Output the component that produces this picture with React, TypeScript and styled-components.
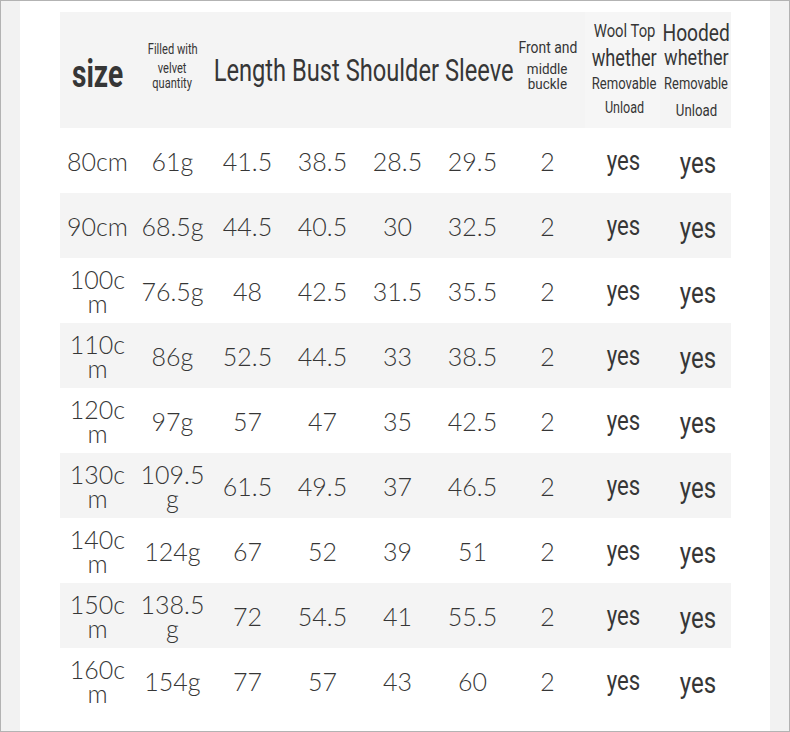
import React from 'react';
import styled, { createGlobalStyle } from 'styled-components';

// size chart rows: [size, filling, length, bust, shoulder, sleeve, buckle]
const rows = [
  ['80cm', '61g', '41.5', '38.5', '28.5', '29.5', '2'],
  ['90cm', '68.5g', '44.5', '40.5', '30', '32.5', '2'],
  ['100cm', '76.5g', '48', '42.5', '31.5', '35.5', '2'],
  ['110cm', '86g', '52.5', '44.5', '33', '38.5', '2'],
  ['120cm', '97g', '57', '47', '35', '42.5', '2'],
  ['130cm', '109.5g', '61.5', '49.5', '37', '46.5', '2'],
  ['140cm', '124g', '67', '52', '39', '51', '2'],
  ['150cm', '138.5g', '72', '54.5', '41', '55.5', '2'],
  ['160cm', '154g', '77', '57', '43', '60', '2'],
];

const GlobalStyle = createGlobalStyle`
  html, body {
    margin: 0;
    padding: 0;
    background: #fff;
  }
  * {
    box-sizing: border-box;
  }
`;

const App: React.FC = () => {
  return (
    <>
      <GlobalStyle />
      <Frame>
        <SideBand />
        <Main>
          <Chart>
            <HeaderRow>
              <HeadCell $shift={10}>
                <Cond $size={38} $weight={700}>size</Cond>
              </HeadCell>
              <HeadCell $shift={-12}>
                <HeadStack>
                  <Cond $size={15} $lh={24}>Filled with</Cond>
                  <Cond $size={14} $lh={15} $sx={0.79}>velvet</Cond>
                  <Cond $size={14} $lh={15} $sx={0.79}>quantity</Cond>
                </HeadStack>
              </HeadCell>
              <WideHeadCell>
                <Cond $size={32}>Length Bust Shoulder Sleeve</Cond>
              </WideHeadCell>
              <HeadCell $shift={-16}>
                <HeadStack>
                  <Cond $size={17} $lh={29} $sx={0.82}>Front and</Cond>
                  <Cond $size={14} $lh={15} $sx={0.96}>middle</Cond>
                  <Cond $size={14} $lh={15} $sx={0.96}>buckle</Cond>
                </HeadStack>
              </HeadCell>
              <HeadCell $light $nudge={4}>
                <HeadStack>
                  <Cond $size={19} $lh={26} $sx={0.78}>Wool Top</Cond>
                  <Cond $size={23} $lh={30} $sx={0.79}>whether</Cond>
                  <Cond $size={17} $lh={18} $sx={0.77}>Removable</Cond>
                  <Cond $size={17} $lh={30}>Unload</Cond>
                </HeadStack>
              </HeadCell>
              <HeadCell $shift={4} $nudge={2}>
                <HeadStack>
                  <Cond $size={24} $lh={26} $sx={0.8}>Hooded</Cond>
                  <Cond $size={22} $lh={24} $sx={0.82}>whether</Cond>
                  <Cond $size={17} $lh={26} $sx={0.76}>Removable</Cond>
                  <Cond $size={17} $lh={28} $sx={0.78}>Unload</Cond>
                </HeadStack>
              </HeadCell>
            </HeaderRow>
            {rows.map((row, i) => (
              <Row key={row[0]} $striped={i % 2 === 1}>
                {row.map((v, j) => (
                  <Cell key={j}>{v}</Cell>
                ))}
                <YesCell $nudge={2}>
                  <Cond $size={27} $sx={0.82}>yes</Cond>
                </YesCell>
                <YesCell $low $nudge={4}>
                  <Cond $size={29} $sx={0.83}>yes</Cond>
                </YesCell>
              </Row>
            ))}
          </Chart>
        </Main>
        <SideBand />
      </Frame>
    </>
  );
};

const columns = 'repeat(8, 75px) 71px';

const Frame = styled.div`
  width: 790px;
  height: 732px;
  display: flex;
  border: 1px solid #b3b3b3;
  background: #fff;
  overflow: hidden;
`;

const SideBand = styled.div`
  width: 19px;
  flex-shrink: 0;
  background: #f2f2f2;
`;

const Main = styled.div`
  flex: 1;
  padding: 11px 39px 0 40px;
`;

const Chart = styled.div`
  width: 671px;
  display: flex;
  flex-direction: column;
  color: #3d3d3d;
`;

const HeaderRow = styled.div`
  display: grid;
  grid-template-columns: ${columns};
  height: 116px;
  background: #f4f4f4;
`;

// $shift moves the content down (positive) or up (negative), $nudge moves it right
const HeadCell = styled.div<{ $light?: boolean; $shift?: number; $nudge?: number }>`
  display: flex;
  align-items: center;
  justify-content: center;
  min-width: 0;
  padding-top: ${p => Math.max(p.$shift ?? 0, 0)}px;
  padding-bottom: ${p => Math.max(-(p.$shift ?? 0), 0)}px;
  padding-left: ${p => p.$nudge ?? 0}px;
  background: ${p => (p.$light ? '#f6f6f6' : 'transparent')};
`;

const WideHeadCell = styled(HeadCell)`
  grid-column: span 4;
  padding-top: 2px;
  padding-left: 7px;
`;

const HeadStack = styled.div`
  display: flex;
  flex-direction: column;
  align-items: center;
`;

// condensed display type, squeezed from Roboto
const Cond = styled.span<{ $size: number; $weight?: number; $lh?: number; $sx?: number }>`
  display: block;
  font-family: Roboto, "Liberation Sans", sans-serif;
  font-size: ${p => p.$size}px;
  font-weight: ${p => p.$weight ?? 400};
  line-height: ${p => (p.$lh ? `${p.$lh}px` : 1.1)};
  white-space: nowrap;
  color: #363636;
  transform: scaleX(${p => p.$sx ?? 0.74});
`;

const Row = styled.div<{ $striped: boolean }>`
  display: grid;
  grid-template-columns: ${columns};
  height: 65px;
  background: ${p => (p.$striped ? '#f4f4f4' : '#fff')};
`;

const Cell = styled.div`
  display: flex;
  align-items: center;
  justify-content: center;
  text-align: center;
  padding: 0 2px;
  font-family: Lato, "Open Sans", sans-serif;
  font-weight: 300;
  font-size: 25px;
  line-height: 24px;
  color: #363636;
  word-break: break-all;
  min-width: 0;
`;

const YesCell = styled.div<{ $low?: boolean; $nudge?: number }>`
  display: flex;
  align-items: center;
  justify-content: center;
  padding-top: ${p => (p.$low ? 6 : 2)}px;
  padding-left: ${p => p.$nudge ?? 0}px;
`;

export default App;
